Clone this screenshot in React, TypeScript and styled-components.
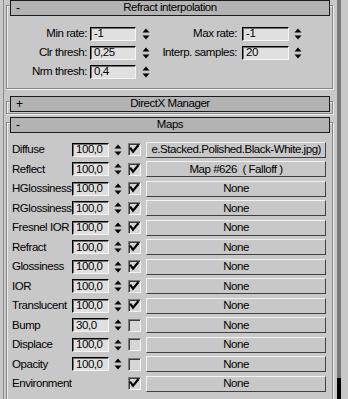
import React from 'react';
import styled, { createGlobalStyle } from 'styled-components';

const GlobalStyle = createGlobalStyle`
  html, body { margin: 0; padding: 0; background: #c8c8c8; }
  body {
    font-family: "Liberation Sans", Arial, sans-serif;
    font-size: 11.5px;
    letter-spacing: -0.45px;
    color: #000;
  }
  * { box-sizing: border-box; }
`;

const Panel = styled.div`
  width: 348px;
  height: 399px;
  overflow: hidden;
  background: #c8c8c8;
  display: flex;
`;

const Column = styled.div`
  margin-left: 3px;
  width: 331px;
  height: 100%;
  border-left: 1px solid #8c8c8c;
  padding-left: 2px;
  display: flex;
  flex-direction: column;
`;

const ScrollStrip = styled.div`
  width: 14px;
  height: 100%;
  padding-left: 3px;
  display: flex;
`;

const Track = styled.div`
  width: 4px;
  height: 100%;
  background: #7a7a7a;
  display: flex;
  flex-direction: column;
  justify-content: flex-end;
`;

const Thumb = styled.div`
  height: 21px;
  background: #000;
`;

const Rollout = styled.section<{ $gap: number; $padBottom: number }>`
  position: relative;
  margin-top: ${p => p.$gap}px;
  padding: 0 4px ${p => p.$padBottom}px 4px;
  flex-shrink: 0;
  &::before {
    content: '';
    position: absolute;
    left: 0;
    right: 1px;
    top: 5px;
    bottom: 1px;
    border: 1px solid #868686;
    box-shadow: inset 1px 1px 0 #f0f0f0, 1px 1px 0 #f0f0f0;
    pointer-events: none;
  }
`;

const Header = styled.div`
  position: relative;
  z-index: 1;
  height: 16px;
  background: #b3b3b3;
  border: 1px solid #1c1c1c;
  display: grid;
  grid-template-columns: 20px 1fr 20px;
  align-items: center;
  line-height: 1;
`;

const Sign = styled.span`
  padding-left: 5px;
  font-size: 12px;
`;

const Title = styled.span`
  text-align: center;
  white-space: nowrap;
`;

const RefractGrid = styled.div`
  position: relative;
  padding-top: 11px;
  display: grid;
  grid-template-columns: 141px 1fr;
  grid-auto-rows: 14px;
  row-gap: 5px;
`;

const Field = styled.div`
  display: flex;
  align-items: center;
  height: 14px;
`;

const FieldLabel = styled.span<{ $w: number }>`
  width: ${p => p.$w}px;
  text-align: right;
  white-space: nowrap;
  line-height: 1;
`;

const NumBox = styled.div<{ $w: number; $ml: number }>`
  width: ${p => p.$w}px;
  height: 14px;
  margin-left: ${p => p.$ml}px;
  background: #e0e0e0;
  border-top: 1px solid #000;
  border-left: 1px solid #000;
  border-bottom: 1px solid #f4f4f4;
  border-right: 1px solid #f4f4f4;
  box-shadow: inset 1px 1px 0 #707070;
  padding-left: 3px;
  display: flex;
  align-items: center;
  line-height: 1;
  white-space: nowrap;
  overflow: hidden;
`;

const SpinWrap = styled.span<{ $ml: number }>`
  margin-left: ${p => p.$ml}px;
  width: 8px;
  height: 14px;
  display: flex;
`;

const MapsGrid = styled.div`
  position: relative;
  padding: 7px 0 0 2px;
  display: grid;
  grid-template-columns: 60px 42px 14px 18px 180px;
  grid-auto-rows: 19.5px;
  align-items: center;
`;

const MapLabel = styled.span`
  white-space: nowrap;
  line-height: 1;
`;

const Check = styled.span`
  width: 13px;
  height: 13px;
  background: #d6d6d6;
  border-top: 1px solid #7c7c7c;
  border-left: 1px solid #7c7c7c;
  border-bottom: 1px solid #f4f4f4;
  border-right: 1px solid #f4f4f4;
  box-shadow: inset 1px 1px 0 #3c3c3c;
  display: flex;
`;

const MapButton = styled.div<{ $alignEnd?: boolean }>`
  width: 180px;
  height: 16px;
  background: #c8c8c8;
  border-top: 1px solid #f2f2f2;
  border-left: 1px solid #f2f2f2;
  border-bottom: 1px solid #404040;
  border-right: 1px solid #404040;
  display: flex;
  align-items: center;
  justify-content: ${p => (p.$alignEnd ? 'flex-end' : 'center')};
  padding: 0 ${p => (p.$alignEnd ? 4 : 0)}px 0 0;
  overflow: hidden;
  white-space: pre;
  line-height: 1;
`;

const Spinner = ({ ml }: { ml: number }) => (
  <SpinWrap $ml={ml}>
    <svg width="8" height="14" viewBox="0 0 8 14">
      <polygon points="4,1.5 7.5,5.5 0.5,5.5" fill="#000" />
      <polygon points="0.5,8.5 7.5,8.5 4,12.5" fill="#000" />
    </svg>
  </SpinWrap>
);

const CheckBox = ({ on }: { on: boolean }) => (
  <Check>
    {on && (
      <svg width="11" height="11" viewBox="0 0 11 11">
        <polyline points="1.8,4.6 4,7.6 8.8,1.8" fill="none" stroke="#000" strokeWidth="2.2" strokeLinecap="square" />
      </svg>
    )}
  </Check>
);

type MapRow = { label: string; value?: string; on: boolean; map: string; alignEnd?: boolean };

const maps: MapRow[] = [
  { label: 'Diffuse', value: '100,0', on: true, map: 'e.Stacked.Polished.Black-White.jpg)', alignEnd: true },
  { label: 'Reflect', value: '100,0', on: true, map: 'Map #626  ( Falloff )' },
  { label: 'HGlossiness', value: '100,0', on: true, map: 'None' },
  { label: 'RGlossiness', value: '100,0', on: true, map: 'None' },
  { label: 'Fresnel IOR', value: '100,0', on: true, map: 'None' },
  { label: 'Refract', value: '100,0', on: true, map: 'None' },
  { label: 'Glossiness', value: '100,0', on: true, map: 'None' },
  { label: 'IOR', value: '100,0', on: true, map: 'None' },
  { label: 'Translucent', value: '100,0', on: true, map: 'None' },
  { label: 'Bump', value: '30,0', on: false, map: 'None' },
  { label: 'Displace', value: '100,0', on: false, map: 'None' },
  { label: 'Opacity', value: '100,0', on: false, map: 'None' },
  { label: 'Environment', on: true, map: 'None' },
];

const LeftField = ({ label, value }: { label: string; value: string }) => (
  <Field>
    <FieldLabel $w={77}>{label}</FieldLabel>
    <NumBox $w={46} $ml={3}>{value}</NumBox>
    <Spinner ml={6} />
  </Field>
);

const RightField = ({ label, value }: { label: string; value: string }) => (
  <Field>
    <FieldLabel $w={86}>{label}</FieldLabel>
    <NumBox $w={47} $ml={5}>{value}</NumBox>
    <Spinner ml={5} />
  </Field>
);

export default function App() {
  return (
    <>
      <GlobalStyle />
      <Panel>
        <Column>
          <Rollout $gap={0} $padBottom={11}>
            <Header>
              <Sign>-</Sign>
              <Title>Refract interpolation</Title>
              <span />
            </Header>
            <RefractGrid>
              <LeftField label="Min rate:" value="-1" />
              <RightField label="Max rate:" value="-1" />
              <LeftField label="Clr thresh:" value="0,25" />
              <RightField label="Interp. samples:" value="20" />
              <LeftField label="Nrm thresh:" value="0,4" />
            </RefractGrid>
          </Rollout>

          <Rollout $gap={6} $padBottom={3}>
            <Header>
              <Sign>+</Sign>
              <Title>DirectX Manager</Title>
              <span />
            </Header>
          </Rollout>

          <Rollout $gap={2} $padBottom={20}>
            <Header>
              <Sign>-</Sign>
              <Title>Maps</Title>
              <span />
            </Header>
            <MapsGrid>
              {maps.map(m => (
                <React.Fragment key={m.label}>
                  <MapLabel>{m.label}</MapLabel>
                  {m.value ? <NumBox $w={37} $ml={0}>{m.value}</NumBox> : <span />}
                  {m.value ? <Spinner ml={0} /> : <span />}
                  <CheckBox on={m.on} />
                  <MapButton $alignEnd={m.alignEnd}>{m.map}</MapButton>
                </React.Fragment>
              ))}
            </MapsGrid>
          </Rollout>
        </Column>
        <ScrollStrip>
          <Track>
            <Thumb />
          </Track>
        </ScrollStrip>
      </Panel>
    </>
  );
}
